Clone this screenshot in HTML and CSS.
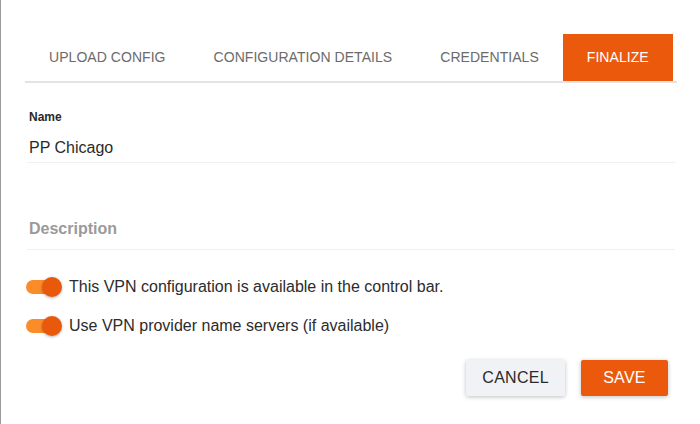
FILE: index.html
```html
<!DOCTYPE html>
<html>
<head>
<meta charset="utf-8">
<link rel="stylesheet" href="styles.css">
</head>
<body>
<div class="dialog">
  <div class="tabs">
    <div class="tab">UPLOAD CONFIG</div>
    <div class="tab">CONFIGURATION DETAILS</div>
    <div class="tab">CREDENTIALS</div>
    <div class="tab active">FINALIZE</div>
  </div>
  <div class="field name-field">
    <div class="label">Name</div>
    <div class="value">PP Chicago</div>
  </div>
  <div class="field desc-field">
    <div class="placeholder">Description</div>
  </div>
  <div class="toggles">
    <label class="toggle-row">
      <span class="switch"><span class="track"></span><span class="thumb"></span></span>
      <span class="toggle-text">This VPN configuration is available in the control bar.</span>
    </label>
    <label class="toggle-row">
      <span class="switch"><span class="track"></span><span class="thumb"></span></span>
      <span class="toggle-text">Use VPN provider name servers (if available)</span>
    </label>
  </div>
  <div class="actions">
    <button class="btn btn-cancel">CANCEL</button>
    <button class="btn btn-save">SAVE</button>
  </div>
</div>
</body>
</html>
```
FILE: styles.css
```css
html, body {
  margin: 0;
  padding: 0;
  background: #ffffff;
}
body {
  width: 700px;
  height: 424px;
  overflow: hidden;
  font-family: "Liberation Sans", Arial, sans-serif;
  border-left: 1px solid #9a9a9a;
  box-sizing: border-box;
}
.dialog {
  padding: 34px 23px 0 24px;
}
.tabs {
  display: flex;
  border-bottom: 2px solid #e3e3e3;
}
.tab {
  height: 47px;
  line-height: 47px;
  padding: 0 24px;
  font-size: 14px;
  letter-spacing: 0.05px;
  color: #6b6b6b;
  white-space: nowrap;
}
.tab.active {
  background: #eb5a0c;
  color: #ffffff;
}
.field {
  margin: 0 2px;
  border-bottom: 1px solid #f0f0f0;
  padding-left: 2px;
}
.name-field {
  padding-top: 27px;
  padding-bottom: 4px;
}
.label {
  font-size: 12px;
  line-height: 14px;
  font-weight: bold;
  color: #2a2a2a;
}
.value {
  margin-top: 14px;
  font-size: 16px;
  line-height: 20px;
  color: #2a2a2a;
}
.desc-field {
  margin-top: 56px;
  padding-bottom: 10px;
}
.placeholder {
  font-size: 16px;
  line-height: 20px;
  font-weight: bold;
  color: #9a9a9a;
}
.toggles {
  margin-top: 26px;
  display: flex;
  flex-direction: column;
  gap: 17px;
}
.toggle-row {
  display: flex;
  align-items: center;
  height: 22px;
}
.switch {
  position: relative;
  width: 36px;
  height: 22px;
  margin-left: 1px;
  margin-right: 7px;
  flex: none;
}
.track {
  position: absolute;
  left: 0;
  top: 4px;
  width: 32px;
  height: 14px;
  border-radius: 7px;
  background: #fb8c2a;
}
.thumb {
  position: absolute;
  left: 16px;
  top: 1px;
  width: 20px;
  height: 20px;
  border-radius: 50%;
  background: #e8590c;
  box-shadow: 0 1px 3px rgba(0,0,0,0.3);
}
.toggle-text {
  font-size: 16px;
  color: #2c2c2c;
}
.actions {
  display: flex;
  justify-content: flex-end;
  gap: 16px;
  margin-top: 23px;
  padding-right: 9px;
}
.btn {
  height: 36px;
  min-width: 87px;
  padding: 0 16px;
  border: none;
  border-radius: 2px;
  font-family: "Liberation Sans", Arial, sans-serif;
  font-size: 16px;
  letter-spacing: 0.3px;
  box-shadow: 0 1px 4px rgba(0,0,0,0.25);
}
.btn-cancel {
  background: #f1f2f6;
  color: #2a2a2a;
}
.btn-save {
  background: #eb5a0c;
  color: #ffffff;
}
```
